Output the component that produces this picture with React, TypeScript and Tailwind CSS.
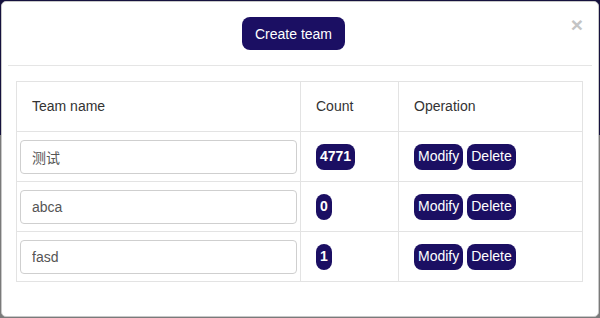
import React from "react";

const rows = [
  { name: "测试", count: "4771" },
  { name: "abca", count: "0" },
  { name: "fasd", count: "1" },
];

export default function App() {
  return (
    <div
      className="w-[600px] h-[318px] p-[1px] bg-[linear-gradient(to_bottom,#15113d_0,#15113d_135px,#7a7a7a_135px)]"
      style={{ fontFamily: '"Liberation Sans", Arial, "Noto Sans CJK SC", sans-serif' }}
    >
      <div className="relative h-[316px] w-[598px] rounded-[5px] bg-white border border-[#c8c8c8]">
        <div className="flex justify-center pt-[15px] pb-[15px] pr-[13px] border-b border-[#e5e5e5] h-[64px] mx-[6px]">
          <button className="h-[33px] px-[13px] rounded-[8px] bg-[#1b0f63] text-white text-[14px] leading-none">
            Create team
          </button>
        </div>
        <span className="absolute right-[15px] top-[12px] text-[21px] font-bold text-[#c4c4c4] leading-none">
          ×
        </span>
        <div className="px-[14px] pt-[15px]">
          <table className="w-[567px] border-collapse text-[14px] text-[#333]">
            <thead>
              <tr className="h-[50px]">
                <th className="w-[284px] border border-[#e3e3e3] px-[15px] text-left font-normal">Team name</th>
                <th className="w-[98px] border border-[#e3e3e3] px-[15px] text-left font-normal">Count</th>
                <th className="border border-[#e3e3e3] px-[15px] text-left font-normal">Operation</th>
              </tr>
            </thead>
            <tbody>
              {rows.map((r) => (
                <tr key={r.name} className="h-[50px]">
                  <td className="border border-[#e3e3e3] px-[3px]">
                    <input
                      readOnly
                      value={r.name}
                      className="w-[277px] h-[34px] rounded-[4px] border border-[#cfcfcf] px-[11px] text-[14px] text-[#555] outline-none"
                    />
                  </td>
                  <td className="border border-[#e3e3e3] px-[15px]">
                    <span className="inline-flex h-[26px] items-center rounded-[8px] bg-[#1b0f63] px-[4px] text-[14px] font-bold text-white">
                      {r.count}
                    </span>
                  </td>
                  <td className="border border-[#e3e3e3] px-[15px]">
                    <div className="flex gap-[4px]">
                      <button className="h-[26px] rounded-[8px] bg-[#1b0f63] px-[4px] text-[14px] text-white">
                        Modify
                      </button>
                      <button className="h-[26px] rounded-[8px] bg-[#1b0f63] px-[4px] text-[14px] text-white">
                        Delete
                      </button>
                    </div>
                  </td>
                </tr>
              ))}
            </tbody>
          </table>
        </div>
      </div>
    </div>
  );
}
